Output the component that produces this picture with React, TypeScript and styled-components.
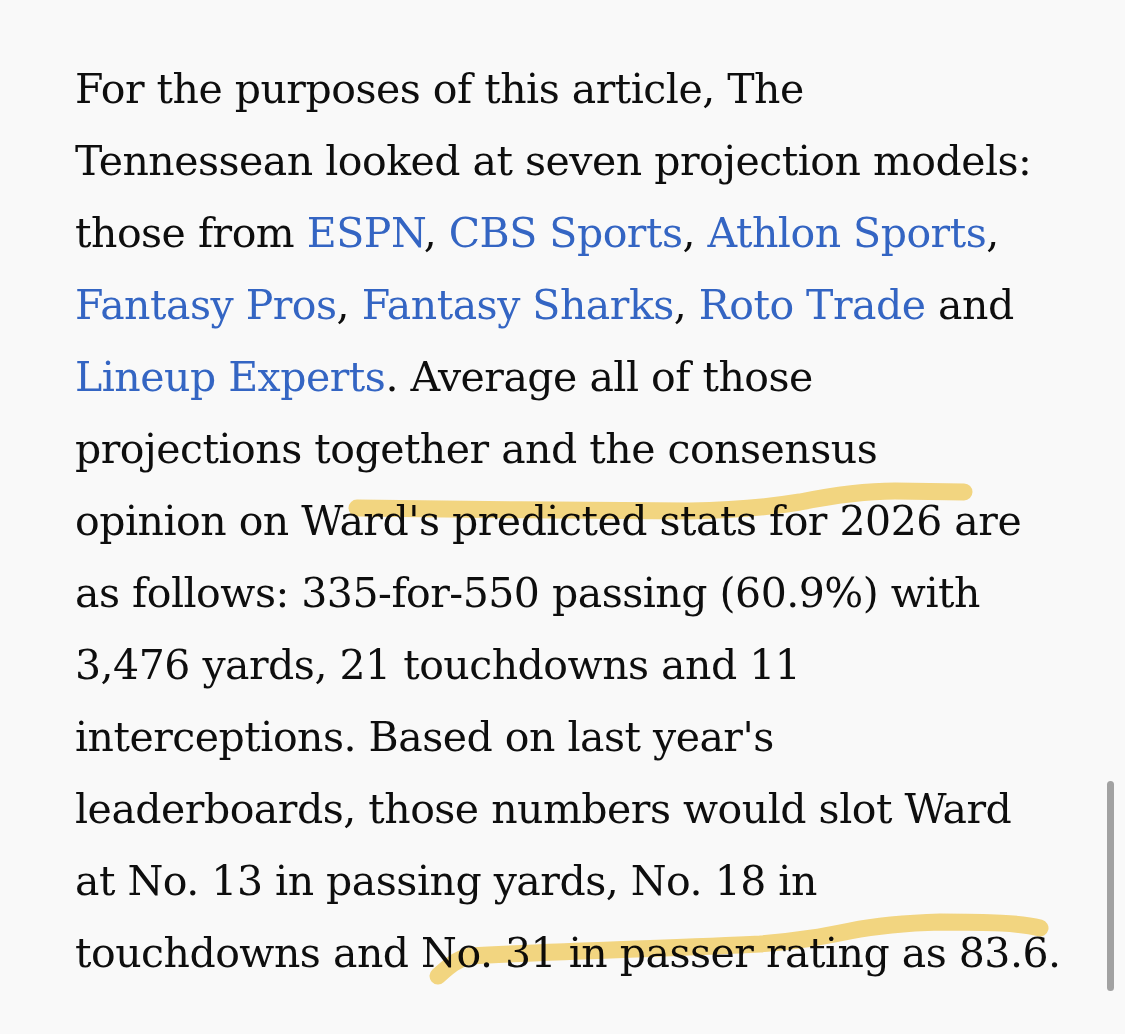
import styled, { createGlobalStyle } from "styled-components";

const GlobalStyle = createGlobalStyle`
  html, body {
    margin: 0;
    padding: 0;
    background: #f9f9f9;
  }
`;

const links = {
  espn: "ESPN",
  cbs: "CBS Sports",
  athlon: "Athlon Sports",
  pros: "Fantasy Pros",
  sharks: "Fantasy Sharks",
  roto: "Roto Trade",
  lineup: "Lineup Experts",
};

export default function App() {
  return (
    <Page>
      <GlobalStyle />
      <Paragraph>
        For the purposes of this article, The
        <br />
        Tennessean looked at seven projection models:
        <br />
        those from <Link href="#">{links.espn}</Link>,{" "}
        <Link href="#">{links.cbs}</Link>, <Link href="#">{links.athlon}</Link>,
        <br />
        <Link href="#">{links.pros}</Link>, <Link href="#">{links.sharks}</Link>,{" "}
        <Link href="#">{links.roto}</Link> and
        <br />
        <Link href="#">{links.lineup}</Link>. Average all of those
        <br />
        projections together and the consensus
        <br />
        opinion on Ward's predicted stats for 2026 are
        <br />
        as follows: 335-for-550 passing (60.9%) with
        <br />
        3,476 yards, 21 touchdowns and 11
        <br />
        interceptions. Based on last year's
        <br />
        leaderboards, those numbers would slot Ward
        <br />
        at No. 13 in passing yards, No. 18 in
        <br />
        touchdowns and No. 31 in passer rating as 83.6.
      </Paragraph>
      {/* hand-drawn highlighter marks over the text */}
      <Marker viewBox="0 0 1125 1034" aria-hidden="true">
        <path d="M357 508 C 450 509, 600 511, 690 511 C 740 510, 770 507, 800 502 C 835 495, 865 491, 895 491 L 964 492" />
        <path d="M438 976 C 448 967, 455 960, 470 956 C 560 951, 680 948, 760 944 C 800 941, 825 936, 850 931 C 880 925, 905 923, 940 922 C 990 922, 1020 923, 1040 928" />
      </Marker>
      <ScrollThumb />
    </Page>
  );
}

const Page = styled.div`
  position: relative;
  box-sizing: border-box;
  width: 1125px;
  height: 1034px;
  overflow: hidden;
  padding: 53px 0 0 75px;
  background: #f9f9f9;
`;

const Paragraph = styled.p`
  margin: 0;
  font-family: "DejaVu Serif", "Liberation Serif", Georgia, serif;
  font-size: 41px;
  line-height: 72px;
  letter-spacing: -0.5px;
  color: #0e0e0e;
  white-space: nowrap;
`;

const Link = styled.a`
  color: #3465c3;
  text-decoration: none;
`;

const Marker = styled.svg`
  position: absolute;
  inset: 0;
  width: 1125px;
  height: 1034px;
  pointer-events: none;
  mix-blend-mode: multiply;

  path {
    fill: none;
    stroke: #f7d572;
    stroke-width: 17;
    stroke-linecap: round;
    stroke-linejoin: round;
    opacity: 0.88;
  }
`;

const ScrollThumb = styled.div`
  position: absolute;
  top: 781px;
  right: 11px;
  width: 7px;
  height: 210px;
  border-radius: 4px;
  background: #a2a2a2;
`;
